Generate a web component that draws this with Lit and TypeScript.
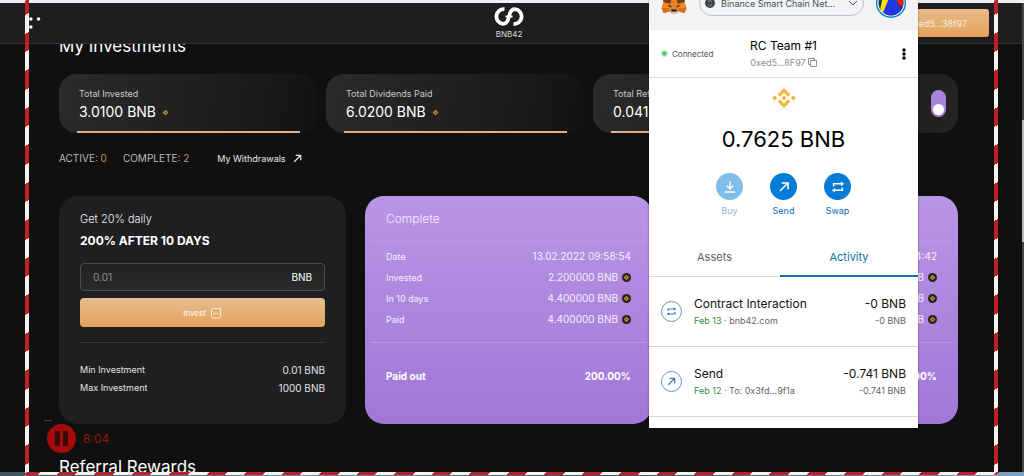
import { LitElement, html, css, svg } from "lit";
import { customElement } from "lit/decorators.js";

const bnbShape = svg`
  <path d="M12 2 5.6 8.4 8 10.8l4-4 4 4 2.4-2.4z"/>
  <path d="M12 22 5.6 15.6 8 13.2l4 4 4-4 2.4 2.4z"/>
  <path d="M12 9.6 9.6 12l2.4 2.4 2.4-2.4z"/>
  <path d="M2.8 9.6.4 12l2.4 2.4L5.2 12zM21.2 9.6 18.8 12l2.4 2.4 2.4-2.4z"/>`;

const coin = html`<svg class="coin" viewBox="0 0 24 24" aria-hidden="true">
  <circle cx="12" cy="12" r="12" fill="#2a1f1e" />
  <path d="M12 4.500 19.500 12 12 19.500 4.500 12z" fill="#b3923a" />
  <path d="M12 9.500 14.500 12 12 14.500 9.500 12z" fill="#4a3a1c" />
</svg>`;

const arrowUpRight = svg`<path d="M5 19 18.5 5.5M8 5h11v11" fill="none" stroke="currentColor" stroke-width="2.6"/>`;
const swapArrows = svg`
  <path d="M4.5 11V6.500H19M19.500 13v4.500H5" fill="none" stroke="currentColor" stroke-width="2.600"/>
  <path d="M17 2.500 22.500 6.500 17 10.500zM7 13.500 1.500 17.500 7 21.500z" fill="currentColor"/>`;
const download = svg`<path d="M12 2v13M6.500 10l5.500 5.500L17.500 10M3 20.500h18" fill="none" stroke="currentColor" stroke-width="2.600"/>`;

const stats = [
  { label: "Total Invested", value: "3.0100 BNB" },
  { label: "Total Dividends Paid", value: "6.0200 BNB" },
  { label: "Total Referral Rewards", value: "0.0413 BNB" },
];

const completed = [
  { date: "13.02.2022 09:58:54", invested: "2.200000 BNB", target: "4.400000 BNB", paid: "4.400000 BNB", out: "200.00%" },
  { date: "12.02.2022 18:34:42", invested: "0.810000 BNB", target: "1.620000 BNB", paid: "1.620000 BNB", out: "200.00%" },
];

const activity = [
  { icon: swapArrows, title: "Contract Interaction", date: "Feb 13", note: "bnb42.com", amount: "-0 BNB", sub: "-0 BNB" },
  { icon: arrowUpRight, title: "Send", date: "Feb 12", note: "To: 0x3fd...9f1a", amount: "-0.741 BNB", sub: "-0.741 BNB" },
];

@customElement("wallet-popup")
class WalletPopup extends LitElement {
  static styles = css`
    :host { display: block; width: 269px; background: #fff; color: #111; box-shadow: 0 0 2px #0006; font-family: Inter, "Liberation Sans", sans-serif; }
    button { font: inherit; color: inherit; background: none; border: 0; padding: 0; }
    .top { display: flex; align-items: center; justify-content: space-between; height: 54px; padding: 0 12px; background: #f2f3f5; }
    .fox { width: 26px; height: 24px; }
    .network { display: flex; align-items: center; width: 165px; height: 26px; padding: 0 5px; box-sizing: border-box; border: 1px solid #bbc0c5; border-radius: 13px; font-size: 9px; white-space: nowrap; color: #4b5057; }
    .network .globe { width: 10px; height: 10px; margin-right: 6px; }
    .network .chev { width: 10px; height: 10px; margin-left: auto; }
    .avatar { width: 30px; height: 30px; }
    .account { display: grid; grid-template-columns: 60px 1fr 60px; align-items: center; height: 48px; box-sizing: border-box; padding: 0 12px; border-bottom: 1px solid #dcdcdc; }
    .status { display: flex; align-items: center; gap: 4px; font-size: 8px; color: #4b5057; }
    .status svg { width: 7px; height: 7px; flex: none; }
    .who { text-align: center; line-height: 17px; font-size: 12px; color: #000; }
    .address { display: flex; align-items: center; justify-content: center; gap: 2px; margin: 0 auto; font-size: 9px; color: #8b8f94; line-height: 17px; }
    .address svg { width: 9px; height: 9px; }
    .menu { justify-self: end; width: 4px; height: 12px; display: flex; }
    .summary { display: flex; flex-direction: column; align-items: center; padding-top: 8px; }
    .token { width: 24px; height: 24px; }
    .balance { margin: 14px 0 0; font-size: 22px; line-height: 30px; font-weight: 400; color: #000; }
    .actions { display: flex; gap: 27px; margin-top: 19px; }
    .action { display: flex; flex-direction: column; align-items: center; gap: 4px; width: 27px; color: #0a6fb8; font-size: 9px; line-height: 14px; }
    .disc { display: grid; place-items: center; width: 27px; height: 27px; border-radius: 50%; background: #037dd6; color: #fff; }
    .disc svg { width: 14px; height: 14px; }
    .off { opacity: .5; }
    .tabs { display: grid; grid-template-columns: 131px 1fr; margin-top: 20px; }
    .tab { height: 39px; font-size: 11px; color: #5a5f66; border-bottom: 1px solid #dcdcdc; }
    .tab.on { color: #0a6fa8; border-bottom: 2px solid #1c6fa8; }
    .list { list-style: none; margin: 0; padding: 0; }
    .item { display: grid; grid-template-columns: 21px 1fr auto; column-gap: 12px; align-items: center; height: 70px; box-sizing: border-box; padding: 0 12px; border-bottom: 1px solid #d4d6d8; }
    .ring { display: grid; place-items: center; width: 19px; height: 19px; border: 1px solid #5f93c8; border-radius: 50%; color: #3b76b5; }
    .ring svg { width: 11px; height: 11px; }
    .title { font-size: 12px; line-height: 17px; }
    .sub { font-size: 9px; line-height: 17px; color: #5f646a; }
    .sub em { font-style: normal; color: #2f8a45; }
    .amount { text-align: right; }
    .rest { height: 11px; }
  `;

  render() {
    return html`
      <div class="top">
        <svg class="fox" viewBox="0 0 52 48" aria-hidden="true">
          <path d="M2 2 22 14h8L50 2l-3 20 4 12-4 10-12-3-5 5h-8l-5-5-12 3L1 34l4-12z" fill="#e8831e"/>
          <path d="M2 2 22 14l-4 12L5 22zM50 2 30 14l4 12 13-4z" fill="#763e1a"/>
          <path d="M5 24 18 26l4 8-17 1zM47 24 34 26l-4 8 17 1z" fill="#f08a25"/>
          <path d="M12 28l8 1 1 5zM40 28l-8 1-1 5z" fill="#233447"/>
          <path d="M1 34h16v7L5 44zM51 34H35v7l12 3z" fill="#d96f1b"/>
          <path d="M17 41l4-3h10l4 3-5 5h-8z" fill="#d7c1b3"/>
          <path d="M21 37h10l1 4H20z" fill="#1b1b1b"/>
        </svg>
        <button class="network">
          <svg class="globe" viewBox="0 0 10 10"><circle cx="5" cy="5" r="5" fill="#3f444a"/><path d="M3 3.500 5 2.500 7 4M3 6.500 5 8 7 6" stroke="#8d9299" fill="none"/></svg>
          Binance Smart Chain Net...
          <svg class="chev" viewBox="0 0 10 10"><path d="M1 3l4 4 4-4" fill="none" stroke="#4b5057"/></svg>
        </button>
        <svg class="avatar" viewBox="0 0 30 30" role="img" aria-label="Account">
          <defs><clipPath id="face"><circle cx="15" cy="15" r="12.500"/></clipPath></defs>
          <circle cx="15" cy="15" r="14.300" fill="#fff" stroke="#037dd6" stroke-width="1.400"/>
          <g clip-path="url(#face)">
            <path d="M0 0h30v30H0z" fill="#173f3a"/>
            <path d="M4 22 7 8h9L8 26z" fill="#f3e214"/>
            <path d="M6 27 14 8h3l10 16-5 6H8z" fill="#2438e0"/>
            <path d="M17 8h13v9l-6 1z" fill="#e01d22"/>
          </g>
        </svg>
      </div>
      <div class="account">
        <span class="status"><svg viewBox="0 0 7 7"><circle cx="3.500" cy="3.500" r="3.500" fill="#bdeec6"/><circle cx="3.500" cy="3.500" r="2" fill="#39c558"/></svg>Connected</span>
        <div class="who">
          RC Team #1
          <button class="address">0xed5...8F97<svg viewBox="0 0 9 9"><path d="M2.500 2.500h6v6h-6zM6.500 2.500v-2h-6v6h2" fill="none" stroke="#8b8f94"/></svg></button>
        </div>
        <button class="menu" aria-label="Account options"><svg viewBox="0 0 4 12" width="4" height="12"><circle cx="2" cy="2" r="1.700"/><circle cx="2" cy="6" r="1.700"/><circle cx="2" cy="10" r="1.700"/></svg></button>
      </div>
      <div class="summary">
        <svg class="token" viewBox="0 0 24 24" fill="#f0b93a"><circle cx="12" cy="12" r="11.500" fill="#fff" stroke="#ececec" stroke-width=".6"/>${bnbShape}</svg>
        <h2 class="balance">0.7625 BNB</h2>
        <div class="actions">
          <button class="action off" disabled><span class="disc"><svg viewBox="0 0 24 24">${download}</svg></span>Buy</button>
          <button class="action"><span class="disc"><svg viewBox="0 0 24 24">${arrowUpRight}</svg></span>Send</button>
          <button class="action"><span class="disc"><svg viewBox="0 0 24 24">${swapArrows}</svg></span>Swap</button>
        </div>
      </div>
      <div class="tabs"><button class="tab">Assets</button><button class="tab on">Activity</button></div>
      <ul class="list">
        ${activity.map((a) => html`<li class="item">
          <span class="ring"><svg viewBox="0 0 24 24">${a.icon}</svg></span>
          <div><div class="title">${a.title}</div><div class="sub"><em>${a.date}</em> · ${a.note}</div></div>
          <div class="amount"><div class="title">${a.amount}</div><div class="sub">${a.sub}</div></div>
        </li>`)}
      </ul>
      <div class="rest"></div>`;
  }
}

@customElement("app-root")
class AppRoot extends LitElement {
  static styles = css`
    :host { display: flex; flex-direction: column; position: relative; height: 100vh; overflow: hidden; background: #101010; color: #fff; font-family: Inter, "Liberation Sans", sans-serif; font-size: 10px; }
    button { font: inherit; color: inherit; border: 0; padding: 0; background: none; }
    .edge { flex: none; height: 3px; background: #eef0f3; }
    .header { flex: none; display: grid; grid-template-columns: 1fr auto 1fr; align-items: center; height: 41px; box-sizing: border-box; padding: 0 35px 0 29px; background: #1e1e20; border-bottom: 1px solid #333335; }
    .burger { width: 12px; height: 12px; display: flex; }
    .brand { display: flex; flex-direction: column; align-items: center; color: #ddd; font-size: 8px; line-height: 12px; text-decoration: none; }
    .brand svg { width: 30px; height: 22px; }
    .wallet { justify-self: end; height: 28px; padding: 0 22px; border-radius: 3px; background: linear-gradient(#e6bb8a, #e5a25c); font-size: 9px; color: #fbeedd; }
    .main { flex: 1; min-height: 0; overflow: hidden; padding: 0 66px 0 59px; }
    .heading { margin: 0; font-size: 17px; font-weight: 400; line-height: 26px; white-space: nowrap; }
    .first { margin-top: -11px; }
    .last { margin-top: 30px; }
    .stats { display: grid; grid-template-columns: 1fr 1fr 1fr 98px; gap: 8px; margin-top: 15px; }
    .stat { height: 59px; box-sizing: border-box; padding: 12px 20px 0; border-radius: 18px; background: linear-gradient(100deg, #2b2b2b, #1a1a1b 75%, #121212); display: flex; flex-direction: column; }
    .label { font-size: 9px; line-height: 16px; color: #c9c9c9; white-space: nowrap; }
    .value { display: flex; align-items: center; gap: 5px; font-size: 14px; line-height: 20px; white-space: nowrap; }
    .value .coin { width: 9px; height: 9px; }
    .line { height: 2px; margin: auto -2px 0; background: #e2ae86; }
    .switch { align-items: flex-end; justify-content: center; padding: 0 12px; background: linear-gradient(100deg, #1a1a1b, #242425); }
    .toggle { display: flex; align-items: flex-end; justify-content: center; width: 15px; height: 27px; border-radius: 8px; background: #a883dc; padding-bottom: 2px; box-sizing: border-box; }
    .knob { width: 11px; height: 11px; border-radius: 50%; background: #fff; }
    .counts { display: flex; align-items: center; height: 16px; margin-top: 17px; color: #b9b9b9; }
    .counts b { font-weight: 400; color: #c98e58; }
    .counts span { margin-right: 16px; }
    .counts a { display: flex; align-items: center; gap: 6px; margin-left: 12px; font-size: 9px; color: #e8e8e8; text-decoration: none; }
    .counts svg { width: 11px; height: 11px; }
    .cards { display: grid; grid-template-columns: repeat(3, 1fr); gap: 19px; margin-top: 30px; }
    .card { height: 228px; box-sizing: border-box; padding: 13px 21px 0; border-radius: 19px; background: #1f1f21; }
    .plan { margin: 0; font-size: 11px; line-height: 20px; font-weight: 300; color: #eee; }
    .offer { margin: 2px 0 12px; font-size: 12px; line-height: 20px; font-weight: 700; }
    .field { display: flex; align-items: center; height: 28px; box-sizing: border-box; padding: 0 12px; border: 1px solid #4b4b4b; border-radius: 4px; background: linear-gradient(#222223, #2a2a2b); }
    .field input { flex: 1; min-width: 0; border: 0; padding: 0; background: none; outline: 0; font: inherit; color: #aaa; }
    .field input::placeholder { color: #8f8f8f; opacity: 1; }
    .invest { display: flex; align-items: center; justify-content: center; gap: 4px; width: 100%; height: 29px; margin-top: 7px; border-radius: 4px; background: linear-gradient(#e6bd8f, #e5a25c); font-size: 8px; }
    .invest svg { width: 12px; height: 12px; }
    .rule { border: 0; height: 1px; margin: 15px 0 18px; background: #373739; }
    .limit { display: flex; justify-content: space-between; line-height: 18px; color: #e2e2e2; }
    .name { font-size: 9px; }
    .done { background: linear-gradient(#b995e6, #a077d6); color: #f6effd; }
    .done .plan { font-size: 12px; color: #f6effd; }
    .done .rule { margin: 12px -15px 23px; background: #b996e4; }
    .done .thin { margin: 12px -15px 4px; background: #bb9ae6; }
    .row { display: flex; justify-content: space-between; align-items: center; line-height: 21px; }
    .worth { display: flex; align-items: center; gap: 4px; }
    .row .coin { width: 9px; height: 9px; }
    .paid { font-weight: 700; color: #fff; }
    .desktop { flex: none; height: 4px; background: linear-gradient(90deg, #3c5560, #6d93a8 30%, #37545f 60%, #7ba5c4); }
    .popup { position: absolute; top: -24px; left: 649px; }
    .frame { position: absolute; pointer-events: none; --dashes: #bf2026 0 14px, #f6f2f0 14px 33px, #bf2026 33px 51px, #f6f2f0 51px 70px, #bf2026 70px 75px; }
    .vert { top: 0; bottom: 1px; width: 4px; background: repeating-linear-gradient(180deg, var(--dashes)); transform: skewY(-20deg); }
    .left { left: 25px; }
    .right { right: 26px; }
    .bottom { left: 25px; right: 26px; bottom: 1px; height: 3px; background: repeating-linear-gradient(90deg, var(--dashes)); transform: skewX(-50deg); }
    .recorder { position: absolute; left: 47px; bottom: 23px; display: flex; align-items: center; gap: 7px; font-size: 12px; color: #8d1512; }
    .recorder svg { width: 29px; height: 29px; display: block; }
    .grip { position: absolute; left: 44px; bottom: 55px; width: 8px; height: 1px; background: #4c4c4c; }
    .scroll { position: absolute; right: 0; top: 3px; bottom: 4px; width: 2px; background: #464646; }
    .thumb { height: 122px; margin-top: 117px; background: #b9b9b9; }
  `;

  render() {
    return html`
      <div class="edge"></div>
      <header class="header">
        <button class="burger" aria-label="Menu"><svg viewBox="0 0 12 12" width="12" height="12" fill="#fff"><circle cx="1.800" cy="2" r="1.800"/><circle cx="9.500" cy="2" r="1.800"/><circle cx="1.800" cy="10" r="1.800"/></svg></button>
        <a class="brand" href="#">
          <svg viewBox="0 0 30 22" fill="none" stroke="#fff" stroke-width="3.800"><path d="M10.500 3.200A7.300 7.300 0 1 0 9 17.800C13 17.800 14.200 14.500 15 10.500S17 3.200 21 3.200A7.300 7.300 0 1 1 19.500 17.800"/><path d="M11.500 10.500 15 10.500 18.500 10.500" stroke-width="2"/></svg>
          BNB42
        </a>
        <button class="wallet">0xed5...38f97</button>
      </header>
      <main class="main">
        <h1 class="heading first">My Investments</h1>
        <section class="stats">
          ${stats.map((s) => html`<div class="stat"><span class="label">${s.label}</span><span class="value">${s.value}${coin}</span><div class="line"></div></div>`)}
          <div class="stat switch"><button class="toggle" role="switch" aria-checked="true" aria-label="Auto update"><span class="knob"></span></button></div>
        </section>
        <div class="counts">
          <span>ACTIVE: <b>0</b></span><span>COMPLETE: <b>2</b></span>
          <a href="#">My Withdrawals<svg viewBox="0 0 24 24">${arrowUpRight}</svg></a>
        </div>
        <section class="cards">
          <article class="card">
            <h2 class="plan">Get 20% daily</h2>
            <p class="offer">200% AFTER 10 DAYS</p>
            <div class="field"><input id="sum" placeholder="0.01" /><label for="sum">BNB</label></div>
            <button class="invest">Invest<svg viewBox="0 0 12 12" fill="none" stroke="#fbeedd"><rect x="1.500" y="1.500" width="9" height="9.500" rx="2"/><path d="M3.500 6.500h2M6.500 6.500H8M10 .5l1.500 1.500"/></svg></button>
            <hr class="rule" />
            <div class="limit"><span class="name">Min Investment</span><span>0.01 BNB</span></div>
            <div class="limit"><span class="name">Max Investment</span><span>1000 BNB</span></div>
          </article>
          ${completed.map((c) => html`<article class="card done">
            <h2 class="plan">Complete</h2>
            <hr class="rule thin" />
            <div class="row"><span class="name">Date</span><span class="worth">${c.date}</span></div>
            <div class="row"><span class="name">Invested</span><span class="worth">${c.invested}${coin}</span></div>
            <div class="row"><span class="name">In 10 days</span><span class="worth">${c.target}${coin}</span></div>
            <div class="row"><span class="name">Paid</span><span class="worth">${c.paid}${coin}</span></div>
            <hr class="rule" />
            <div class="row paid"><span>Paid out</span><span class="worth">${c.out}</span></div>
          </article>`)}
        </section>
        <h1 class="heading last">Referral Rewards</h1>
      </main>
      <div class="desktop"></div>
      <div class="scroll"><div class="thumb"></div></div>
      <div class="frame vert left"></div>
      <div class="frame vert right"></div>
      <div class="frame bottom"></div>
      <div class="grip"></div>
      <div class="recorder"><svg viewBox="0 0 29 29"><circle cx="14.500" cy="14.500" r="14.500" fill="#a50b0b"/><path d="M8 7h5v15H8zM16 7h5v15h-5z" fill="#3a0b0b"/></svg>8:04</div>
      <wallet-popup class="popup"></wallet-popup>`;
  }
}
